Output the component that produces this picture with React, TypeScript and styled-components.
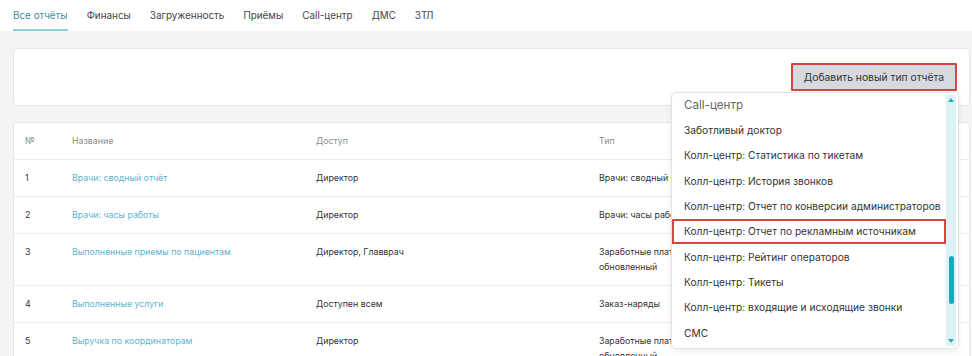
import React from "react";
import styled, { createGlobalStyle } from "styled-components";

const GlobalStyle = createGlobalStyle`
  html, body {
    margin: 0;
    padding: 0;
    background: #f4f4f4;
    font-family: Inter, "Noto Sans", Arial, sans-serif;
    color: #333;
  }
  * { box-sizing: border-box; }
`;

const PageEl = styled.div`
  width: 972px;
  height: 356px;
  overflow: hidden;
  background: #f4f4f4;
`;

const TabsEl = styled.div`
  display: flex;
  gap: 19px;
  height: 31px;
  padding: 0 13px;
  background: #fff;
`;

const TabEl = styled.div<{ $active?: boolean }>`
  display: flex;
  align-items: center;
  height: 31px;
  font-size: 9.9px;
  color: ${(p) => (p.$active ? "#3d8ca6" : "#444")};
  border-bottom: 2px solid ${(p) => (p.$active ? "#8ad0df" : "transparent")};
  padding-top: 1px;
`;

const ContentEl = styled.div`
  display: flex;
  flex-direction: column;
  gap: 16px;
  padding: 17px 2px 0 13px;
`;

const ToolbarCardEl = styled.div`
  display: flex;
  justify-content: flex-end;
  padding: 14px 12px;
  background: #fff;
  border: 1px solid #e6e6e6;
  border-radius: 4px;
`;

const ButtonWrapEl = styled.div`
  position: relative;
`;

const AddButtonEl = styled.button`
  display: block;
  height: 28px;
  padding: 0 11px;
  background: #d6d9e0;
  border: 2px solid #d2473f;
  border-radius: 1px;
  font-family: inherit;
  font-size: 10.3px;
  color: #333;
`;

const DropdownEl = styled.div`
  position: absolute;
  top: 29px;
  right: -2px;
  width: 288px;
  height: 257px;
  display: flex;
  background: #fff;
  border: 1px solid #e2e2e2;
  border-radius: 5px;
  box-shadow: 0 2px 6px rgba(0, 0, 0, 0.08);
  z-index: 10;
  overflow: hidden;
`;

const OptionListEl = styled.div`
  flex: 1;
  display: flex;
  flex-direction: column;
`;

const GroupTitleEl = styled.div`
  height: 24.5px;
  flex-shrink: 0;
  display: flex;
  align-items: center;
  padding-left: 12px;
  font-size: 11.6px;
  color: #666;
`;

const OptionEl = styled.div<{ $marked?: boolean }>`
  height: 25.3px;
  flex-shrink: 0;
  display: flex;
  align-items: center;
  padding-left: ${(p) => (p.$marked ? "10px" : "12px")};
  font-size: 10.2px;
  white-space: nowrap;
  color: #333;
  border: ${(p) => (p.$marked ? "2px solid #d2473f" : "none")};
`;

const ScrollTrackEl = styled.div`
  width: 10px;
  margin: 2px 2px 2px 0;
  background: #dcf2f7;
  border-radius: 2px;
  display: flex;
  flex-direction: column;
  align-items: center;
  padding: 3px 0;
`;

const ArrowEl = styled.div<{ $down?: boolean }>`
  width: 0;
  height: 0;
  border-left: 3px solid transparent;
  border-right: 3px solid transparent;
  ${(p) =>
    p.$down
      ? "border-top: 4px solid #2aaac2;"
      : "border-bottom: 4px solid #2aaac2;"}
`;

const ThumbEl = styled.div`
  width: 5px;
  height: 48px;
  margin-top: 154px;
  background: #1aa8c0;
  border-radius: 3px;
`;

const SpacerEl = styled.div`
  flex: 1;
`;

const TableCardEl = styled.div`
  background: #fff;
  border: 1px solid #e6e6e6;
  border-radius: 4px;
`;

const RowEl = styled.div<{ $head?: boolean }>`
  display: grid;
  grid-template-columns: 47px 244px 283px 125px 1fr;
  padding: 0 11px;
  border-bottom: 1px solid #ececec;
  font-size: 8.8px;
  color: ${(p) => (p.$head ? "#8c8c8c" : "#333")};
  line-height: 15px;
`;

const CellEl = styled.div`
  padding: 10px 12px 11px 0;
`;

const LinkEl = styled.span`
  color: #5cb5cd;
`;

const tabs = ["Все отчёты", "Финансы", "Загруженность", "Приёмы", "Call-центр", "ДМС", "ЗТЛ"];

const rows = [
  { n: 1, name: "Врачи: сводный отчёт", access: "Директор", type: "Врачи: сводный отчёт" },
  { n: 2, name: "Врачи: часы работы", access: "Директор", type: "Врачи: часы работы" },
  { n: 3, name: "Выполненные приемы по пациентам", access: "Директор, Главврач", type: "Заработные платы обновленный" },
  { n: 4, name: "Выполненные услуги", access: "Доступен всем", type: "Заказ-наряды" },
  { n: 5, name: "Выручка по координаторам", access: "Директор", type: "Заработные платы обновленный" },
];

const options = [
  "Заботливый доктор",
  "Колл-центр: Статистика по тикетам",
  "Колл-центр: История звонков",
  "Колл-центр: Отчет по конверсии администраторов",
  "Колл-центр: Отчет по рекламным источникам",
  "Колл-центр: Рейтинг операторов",
  "Колл-центр: Тикеты",
  "Колл-центр: входящие и исходящие звонки",
  "СМС",
];

function App() {
  return (
    <PageEl>
      <GlobalStyle />
      <TabsEl>
        {tabs.map((t, i) => (
          <TabEl key={t} $active={i === 0}>
            {t}
          </TabEl>
        ))}
      </TabsEl>
      <ContentEl>
        <ToolbarCardEl>
          <ButtonWrapEl>
            <AddButtonEl>Добавить новый тип отчёта</AddButtonEl>
            <DropdownEl>
              <OptionListEl>
                <GroupTitleEl>Call-центр</GroupTitleEl>
                {options.map((o, i) => (
                  <OptionEl key={o} $marked={i === 4}>
                    {o}
                  </OptionEl>
                ))}
              </OptionListEl>
              <ScrollTrackEl>
                <ArrowEl />
                <ThumbEl />
                <SpacerEl />
                <ArrowEl $down />
              </ScrollTrackEl>
            </DropdownEl>
          </ButtonWrapEl>
        </ToolbarCardEl>
        <TableCardEl>
          <RowEl $head>
            <CellEl>№</CellEl>
            <CellEl>Название</CellEl>
            <CellEl>Доступ</CellEl>
            <CellEl>Тип</CellEl>
            <CellEl />
          </RowEl>
          {rows.map((r) => (
            <RowEl key={r.n}>
              <CellEl>{r.n}</CellEl>
              <CellEl>
                <LinkEl>{r.name}</LinkEl>
              </CellEl>
              <CellEl>{r.access}</CellEl>
              <CellEl>{r.type}</CellEl>
              <CellEl />
            </RowEl>
          ))}
        </TableCardEl>
      </ContentEl>
    </PageEl>
  );
}

export default App;
